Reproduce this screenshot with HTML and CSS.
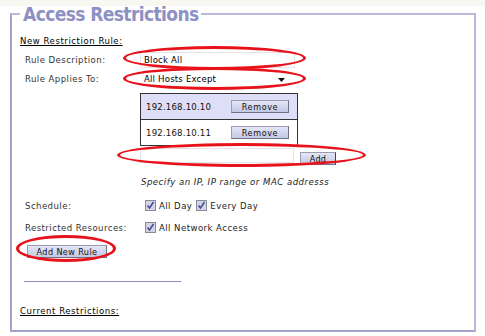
FILE: index.html
```html
<!DOCTYPE html>
<html>
<head>
<meta charset="utf-8">
<title>Access Restrictions</title>
<link rel="stylesheet" href="styles.css">
</head>
<body>
<fieldset class="panel">
  <legend class="panel-title">Access Restrictions</legend>
  <div class="section-title">New Restriction Rule:</div>

  <div class="row row-desc">
    <div class="label">Rule Description:</div>
    <div class="text-input desc-input">Block All</div>
  </div>

  <div class="row row-applies">
    <div class="label">Rule Applies To:</div>
    <div class="select">
      <span>All Hosts Except</span>
      <svg class="arrow" width="7" height="4" viewBox="0 0 7 4"><path d="M0 0H7L3.5 4Z" fill="#111"/></svg>
    </div>
  </div>

  <div class="ip-list">
    <div class="ip-row selected">
      <span class="ip">192.168.10.10</span>
      <span class="btn remove">Remove</span>
    </div>
    <div class="ip-row">
      <span class="ip">192.168.10.11</span>
      <span class="btn remove">Remove</span>
    </div>
  </div>

  <div class="add-row">
    <div class="text-input add-input"></div>
    <span class="btn add-btn">Add</span>
  </div>

  <div class="hint">Specify an IP, IP range or MAC addresss</div>

  <div class="row row-check">
    <div class="label">Schedule:</div>
    <div class="checks">
      <span class="check">
        <svg width="11" height="11" viewBox="0 0 11 11"><rect x="0.5" y="0.5" width="10" height="10" fill="#d3d4e2" stroke="#8a8b98"/><path d="M2.5 5.5L4.5 8L8.5 2" fill="none" stroke="#3a4a9c" stroke-width="1.5"/></svg>
        All Day
      </span>
      <span class="check">
        <svg width="11" height="11" viewBox="0 0 11 11"><rect x="0.5" y="0.5" width="10" height="10" fill="#d3d4e2" stroke="#8a8b98"/><path d="M2.5 5.5L4.5 8L8.5 2" fill="none" stroke="#3a4a9c" stroke-width="1.5"/></svg>
        Every Day
      </span>
    </div>
  </div>

  <div class="row row-check row-res">
    <div class="label">Restricted Resources:</div>
    <div class="checks">
      <span class="check">
        <svg width="11" height="11" viewBox="0 0 11 11"><rect x="0.5" y="0.5" width="10" height="10" fill="#d3d4e2" stroke="#8a8b98"/><path d="M2.5 5.5L4.5 8L8.5 2" fill="none" stroke="#3a4a9c" stroke-width="1.5"/></svg>
        All Network Access
      </span>
    </div>
  </div>

  <div class="btn new-rule">Add New Rule</div>

  <div class="divider"></div>

  <div class="section-title current">Current Restrictions:</div>

  <span class="mark mark-desc"></span>
  <span class="mark mark-applies"></span>
  <span class="mark mark-add"></span>
  <span class="mark mark-new"></span>
</fieldset>
</body>
</html>
```

FILE: styles.css
```css
html, body {
  margin: 0;
  padding: 0;
}
body {
  width: 485px;
  height: 336px;
  overflow: hidden;
  background: linear-gradient(#f8f7f1 0, #f8f7f1 6px, #ffffff 6px);
  font-family: "DejaVu Sans Condensed", "DejaVu Sans", Verdana, sans-serif;
  font-size: 9.5px;
  color: #2a2a2a;
}
.panel {
  position: relative;
  margin: 4px 9px 0 10px;
  padding: 0 0 0 8px;
  height: 324px;
  border: 2px solid #b9b9d9;
  border-left-color: #a3a3cf;
  border-bottom-color: #a3a3cf;
  min-width: 0;
}
.panel-title {
  padding: 0 2px 0 3px;
  margin-left: 0;
  font-size: 19px;
  line-height: 20px;
  font-weight: bold;
  color: #8c90c2;
  letter-spacing: -0.6px;
}
.section-title {
  margin-top: 10px;
  height: 14px;
  line-height: 14px;
  color: #000;
  text-decoration: underline;
  letter-spacing: 0.55px;
}
.row {
  display: flex;
  align-items: center;
  height: 19px;
}
.row-desc { margin-top: 2px; }
.label {
  width: 115px;
  margin-left: 5px;
  flex: none;
  color: #333;
  letter-spacing: 0.45px;
}
.text-input {
  box-sizing: border-box;
  border: 1px solid #e3e3e8;
  background: #fff;
  color: #000;
  padding-left: 3px;
}
.desc-input {
  width: 155px;
  height: 16px;
  line-height: 14px;
  letter-spacing: 0.2px;
}
.select {
  box-sizing: border-box;
  width: 150px;
  height: 16px;
  display: flex;
  align-items: center;
  justify-content: space-between;
  padding: 0 5px 0 4px;
  color: #000;
  background: #fff;
  letter-spacing: 0.2px;
}
.arrow { margin-top: 2px; }
.ip-list {
  margin: 5px 0 0 120px;
  width: 156px;
  border: 1px solid #333;
}
.ip-row {
  display: flex;
  align-items: center;
  height: 25px;
  padding-left: 5px;
  color: #111;
  background: #fff;
  letter-spacing: 0.2px;
}
.ip-row + .ip-row { border-top: 1px solid #333; }
.ip-row.selected { background: #dedef8; }
.ip { width: 85px; }
.btn {
  box-sizing: border-box;
  display: inline-flex;
  align-items: center;
  justify-content: center;
  height: 13px;
  border: 1px solid #9a9cb0;
  border-right-color: #6f7188;
  border-bottom-color: #6f7188;
  background: linear-gradient(#e4e6f6, #c3c8e4);
  color: #111;
  font-size: 9px;
  letter-spacing: 0.6px;
}
.remove { width: 58px; }
.add-row {
  display: flex;
  align-items: flex-end;
  height: 17px;
  margin: 2px 0 0 120px;
}
.add-input {
  width: 154px;
  height: 15px;
  align-self: flex-start;
}
.add-btn {
  margin-left: 6px;
  width: 36px;
  letter-spacing: 0.2px;
  border-right: 1px solid #444;
}
.hint {
  margin: 10px 0 0 121px;
  height: 14px;
  line-height: 14px;
  font-style: italic;
  color: #222;
  letter-spacing: 0.5px;
}
.row-check {
  margin-top: 7px;
  height: 18px;
}
.row-res { margin-top: 4px; }
.checks {
  display: flex;
  align-items: center;
  margin-left: 5px;
}
.check {
  display: inline-flex;
  align-items: center;
  gap: 3px;
  margin-right: 4px;
  color: #222;
  letter-spacing: 0.45px;
}
.new-rule {
  margin: 9px 0 0 7px;
  width: 80px;
  letter-spacing: 0.4px;
}
.divider {
  margin: 23px 0 0 4px;
  width: 157px;
  height: 1px;
  background: #8c8cc0;
}
.current { margin-top: 22px; }
.mark {
  position: absolute;
  box-sizing: border-box;
  border: 3px solid #e8121a;
  border-radius: 50%;
}
.mark-desc { left: 111px; top: 22px; width: 183px; height: 24px; }
.mark-applies { left: 111px; top: 43px; width: 183px; height: 23px; }
.mark-add { left: 105px; top: 119px; width: 249px; height: 24px; }
.mark-new { left: 4px; top: 211px; width: 100px; height: 27px; }
```
